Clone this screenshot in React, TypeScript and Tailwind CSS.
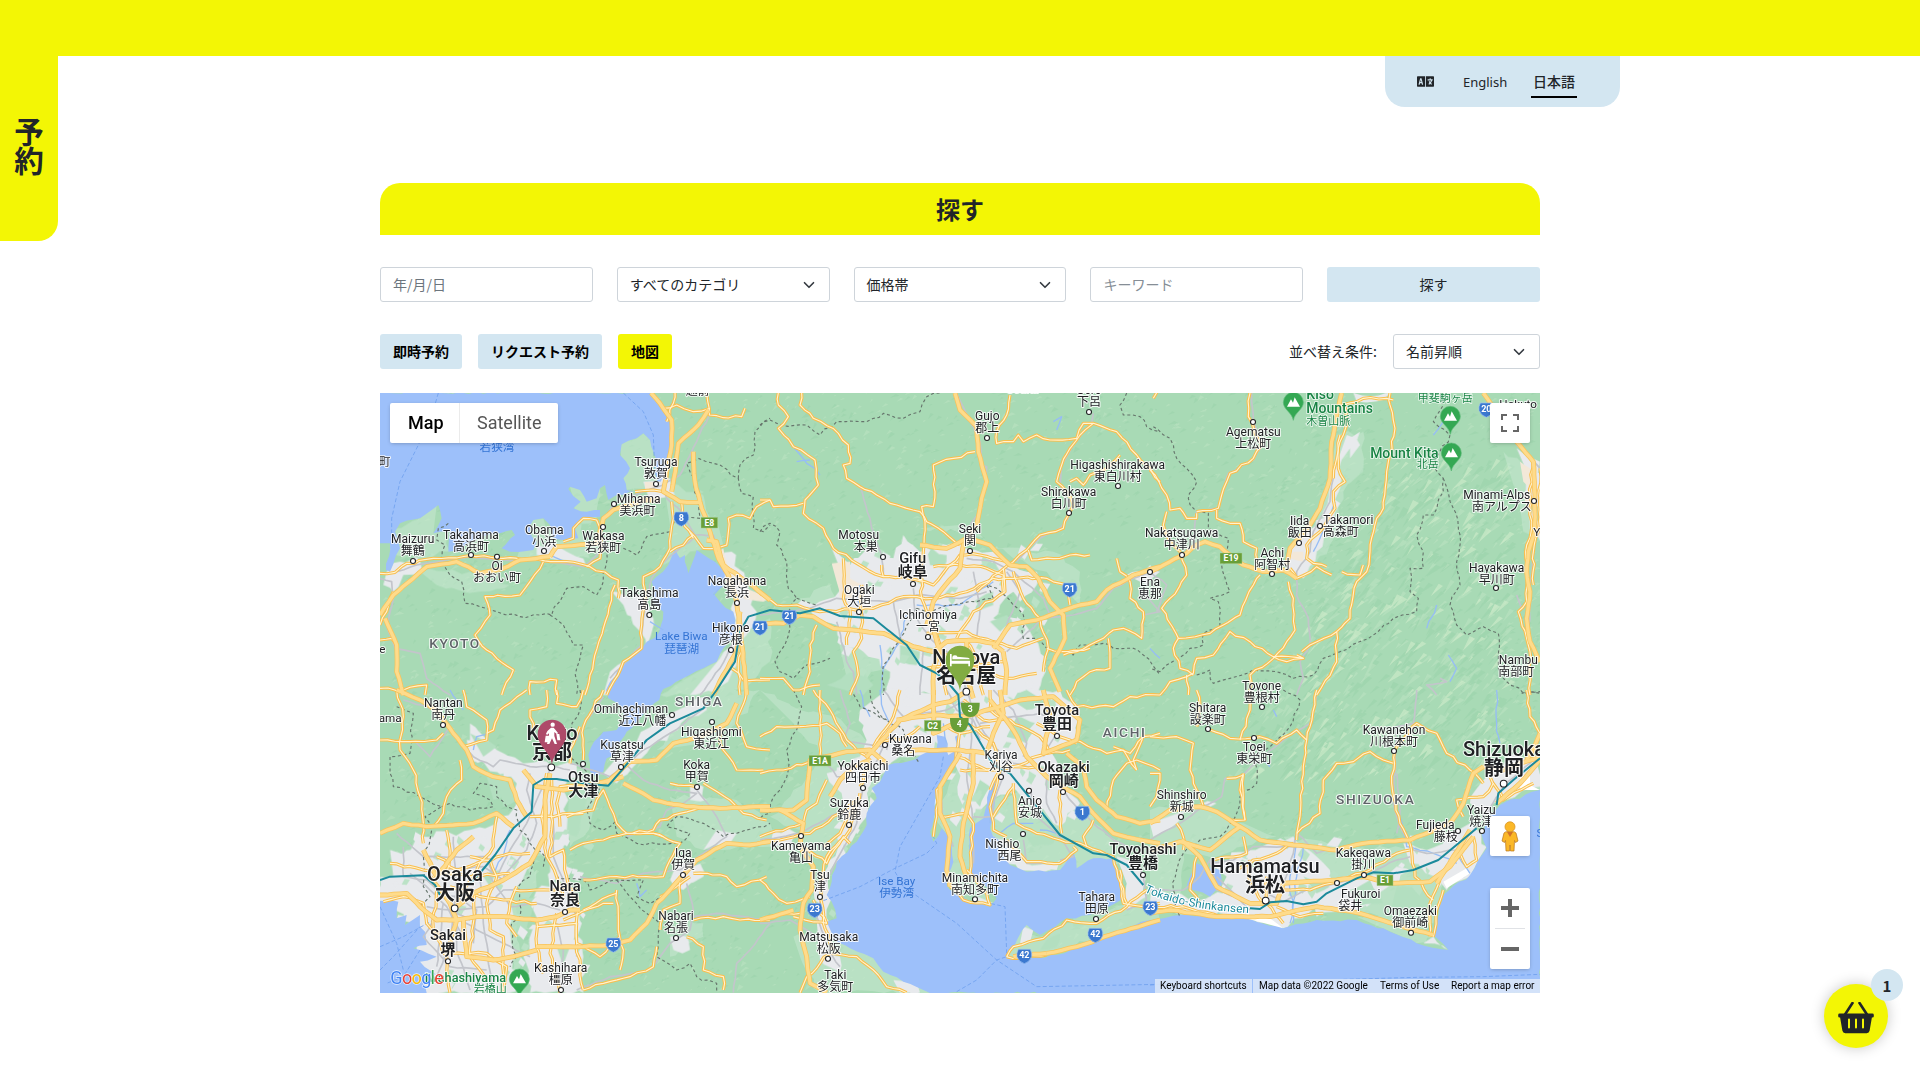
import React from "react";
import { FaLanguage } from "react-icons/fa";

type Tile = {
  x: number;
  y: number;
  light?: string[];
  urban?: string[];
  green?: string[];
  sand?: string[];
  highways: string[];
  roads: string[];
  rails: string[];
  borders: string[];
  ferries: string[];
  streams?: string[];
};

const tiles: Tile[] = [
  {
    x: 0,
    y: 0,
    light: [
      "1040,830 1120,740 1200,700 1200,830 1120,915 1000,930 870,930 930,890",
      "200,360 150,400 75,430 60,500 160,520 240,500 230,440 190,445",
      "750,180 820,145 850,200 860,290 825,312 770,315 760,280",
      "880,290 1000,330 1060,480 960,500 880,540 900,420",
      "480,400 520,400 560,470 610,430 680,400 690,300 640,300 600,305 660,520 440,520",
      "150,560 300,560 420,600 330,620 200,600",
    ],
    urban: [
      "50,560 90,530 150,525 155,550 100,570 70,620 40,600",
      "500,480 545,470 590,500 640,520 650,545 540,520 500,510",
      "820,290 900,280 915,330 840,350",
      "725,620 830,640 850,700 830,790 760,660",
      "1050,520 1085,500 1130,600 1160,680 1120,760 1090,720 1080,610",
      "1050,820 1100,760 1110,830 1040,925 960,930",
      "720,860 760,830 770,850 715,930 700,930",
    ],
    sand: ["825,290 870,290 860,312 825,312", "1040,500 1060,490 1080,560 1120,610 1070,600", "1130,610 1200,640 1180,650 1120,640"],
    highways: [
      "843,24 870,55 905,105 905,180 890,260 880,320 930,350 990,352",
      "1015,75 985,120 925,175 918,240 905,320",
      "970,200 975,290 990,350 1020,440 1045,520 1075,570 1100,650 1110,720 1130,930",
      "30,690 70,630 130,580 170,545 260,530 330,565 400,550 450,525 540,515",
      "540,515 560,485 680,475 700,400 730,375 820,345 870,345",
      "45,700 80,780 80,860 100,930",
      "1010,465 1040,470 1060,540 1130,590 1200,645",
      "1110,680 1100,800 1060,870 1030,930",
    ],
    roads: [
      "30,565 75,562 110,535 190,520 300,512 400,520 500,522 590,530 660,545 745,585 745,640",
      "880,70 920,60 970,80 1020,70",
      "920,0 910,55 890,110",
      "1010,24 1018,90 1060,98 1115,95 1125,70",
      "1200,345 1160,365 1140,400 1100,390 1075,400 1070,480 1040,490",
      "905,350 910,400 900,490 870,545 820,575 825,640 815,720 815,790 760,830 710,930",
      "960,440 1000,490 1040,490",
      "900,500 940,480 970,450",
      "935,350 935,400 970,460",
      "520,530 480,590 450,630 345,635 360,690 315,750 350,795 430,855 395,930",
      "735,600 700,730 660,870 645,930",
      "30,765 65,760 80,780",
      "30,910 100,915 170,900 165,930",
      "70,620 50,680 30,720",
      "580,470 610,460 610,430 640,400 680,405 690,440 690,520 650,545",
      "795,320 850,315 880,320",
      "480,930 480,890 560,885 560,930",
      "1085,850 1120,885 1200,885",
      "1115,780 1105,860 1110,930",
    ],
    rails: [
      "30,580 65,590 70,640 50,720 75,790 150,805 170,880 240,930",
      "80,560 140,540 300,515 400,525 500,525 640,545 690,500 700,400 730,360 820,320 880,300",
      "1010,24 1018,90 980,170 930,270 880,300 890,340 935,380 975,450 1030,450 1060,540 1095,640 1110,730 1050,850 990,930",
      "975,455 870,540 845,580 820,700 815,780 720,880",
    ],
    borders: [
      "235,415 205,430 200,465 225,480 215,530 240,570 275,590 285,655 330,665 380,680 450,695 510,690 545,690 590,610 640,605 680,630 700,590 710,500 740,480",
      "540,690 580,720 610,780 640,780 620,850 620,930",
      "760,490 800,510 830,455 900,440 915,400 990,400 985,340 960,260 950,235 985,220 1050,240 1105,280 1115,325 1150,335 1150,430 1180,440 1200,420",
      "1105,280 1110,240 1150,210 1155,140 1200,100",
    ],
    ferries: ["205,24 180,110 90,290 65,400 65,470", "760,24 820,80 850,150 855,280"],
    streams: ["1030,630 1060,600", "840,710 880,735", "540,510 600,540"],
  },
  {
    x: 1170,
    y: 0,
    light: [
      "480,430 620,440 760,520 860,560 960,660 960,560 880,500 800,500 720,490 600,420",
      "120,640 210,600 250,700 160,690",
      "230,740 330,780 390,860 260,880",
    ],
    urban: [
      "215,490 270,540 330,480 400,520 430,450 480,500 560,480 620,490 700,500 760,540 830,560 830,600 780,650 760,620 720,660 700,700 790,710 820,760 860,820 830,930 380,930 390,860 310,800 250,780 230,720 160,690 110,660 210,640 260,600",
      "1100,570 1170,540 1200,560 1160,600",
    ],
    green: ["420,780 480,800 470,840 420,830", "690,710 740,690 760,720 720,740", "640,650 700,620 700,660 650,680", "500,490 560,510 550,550 510,540", "660,540 700,520 720,560", "200,900 300,850 340,900 310,930"],
    sand: ["215,535 270,530 270,580 310,600 310,640 240,640 230,590"],
    highways: [
      "585,24 600,75 650,125 655,200 680,290 665,340 650,420 610,480 600,550 540,620 520,650 500,720",
      "0,715 70,715 120,690 160,695 220,730 370,745 460,785 520,800 560,770 640,765 700,775 730,800",
      "480,480 560,490 620,460 690,480 750,540 800,545 835,580 870,650 910,690 915,760 870,850 900,920",
      "700,790 750,720 830,705 900,680 960,660 1010,650 1040,615 1120,570 1200,545",
      "520,730 540,800 520,850 520,930",
      "730,800 740,860 735,930",
      "640,940 620,860 620,770",
    ],
    roads: [
      "55,24 55,60 85,95 55,130 100,185 165,225 175,300 135,345 130,385 190,430 220,490 290,535 370,575 450,580 520,600 600,510 660,510 740,530",
      "125,24 120,60 160,100 235,145 265,180 270,235 250,240 260,280 300,305 350,330 390,355 480,380 500,410 550,440 600,480",
      "0,345 30,345 40,365 130,355",
      "645,200 580,220 520,240 525,320 520,365 485,365 495,410 490,500 480,590",
      "750,30 740,90 710,140 710,175 760,170 775,150 790,170 830,150 870,165 950,160 970,115 1000,115 1070,140 1130,210 1200,290",
      "1000,115 960,150 930,190 905,240 890,290 920,320 940,360 925,390 910,430 840,450 800,495 760,530 720,560 650,620",
      "930,290 950,280 970,300 990,270 1040,250 1080,210",
      "805,495 815,525 900,520 930,510 990,510",
      "1070,520 1080,560 1110,590 1110,640 1150,680 1145,760 1090,730 1060,735 1030,760 950,800 910,810",
      "0,625 50,660 110,660 180,680 340,670 430,635 520,640 620,620 700,580 760,580 860,580 920,600 930,660",
      "250,520 250,640 270,670 260,780",
      "305,600 305,760 280,800 295,870 270,930",
      "365,540 370,575",
      "170,720 150,780 150,860 130,930",
      "0,880 70,880 100,915 180,900",
      "485,580 485,640 510,690 540,780 560,930",
      "520,545 600,540 680,550 730,570 730,620",
      "730,550 735,620 640,680 590,760",
      "760,560 790,640 840,700 865,790 850,860",
      "500,745 620,740 700,770 770,790 850,760",
      "1045,760 1050,850 990,860 950,890 930,930",
      "860,790 900,800 990,790",
      "470,790 560,810 650,850 740,880 830,865",
      "500,850 620,840 730,830",
      "620,770 650,820 670,930",
      "1200,0 1180,40",
    ],
    rails: [
      "590,24 630,110 660,170 665,240 680,245 665,370 630,420",
      "1000,85 995,115 940,180 905,240 900,300 925,350 925,400 900,430 840,460 770,530",
      "300,305 330,400 335,430 365,510 370,570",
      "0,690 150,670 230,640 400,650 470,630 600,640 680,620",
      "460,610 465,690 510,760 560,800 610,860 620,930",
      "620,520 700,530 760,560 850,640 870,690",
      "1200,545 1060,610 1010,670 940,690 850,700 740,800",
      "230,710 260,830 280,860 290,930",
      "400,650 420,760 490,800 480,930",
      "640,560 660,680 650,760",
      "1150,620 1200,680 1150,690 1150,760",
      "740,560 780,620 740,720",
    ],
    borders: [
      "0,120 30,105 60,120 140,120 180,150 230,110 320,110 370,85 430,100 480,80 500,35 540,24",
      "0,440 30,415 60,440 50,480 80,530 85,610 110,640 80,690 90,730 60,800 45,830 60,860 100,880 140,840 210,820",
      "110,640 170,660",
      "470,670 500,680 580,660 650,650 700,640 680,600 710,610 760,660 790,690 790,760 830,760 860,790 900,800 940,810 960,780 1030,775 1060,790 1120,790 1150,810 1200,870",
      "470,670 420,760 370,840 370,930",
      "1100,24 1080,60 1090,90 1140,95 1160,125 1200,140",
    ],
    ferries: [],
    streams: ["90,170 140,235 180,270", "440,690 420,770 370,850 360,930", "300,600 290,640 310,690", "470,660 600,660 700,590", "880,110 905,95 890,135", "110,230 150,225", "360,780 365,850"],
  },
  {
    x: 2340,
    y: 0,
    light: [
      "560,150 640,140 640,260 580,320 540,480 460,580 420,560 480,440 530,330",
      "1060,200 1170,280 1170,460 1120,440 1090,300",
    ],
    urban: [
      "590,150 630,140 630,180 600,220 600,190 570,240 570,310 555,380 530,430 500,500 460,580 410,560 420,480 470,440 520,400 540,290",
      "610,24 720,24 700,45 620,50",
      "1100,190 1170,230 1170,470 1140,430 1150,370 1120,330 1130,260",
    ],
    green: [],
    sand: ["430,500 460,500 460,530 420,520", "1120,330 1140,330 1140,400", "1110,230 1140,250 1150,320 1120,290"],
    highways: [
      "575,24 560,90 545,170 540,280 510,370 480,420 420,490 410,540",
      "0,560 60,530 110,505 140,480 165,470 210,485 240,510 280,540 340,560 400,555 440,580",
      "1000,24 1100,170 1150,230 1155,330 1155,440 1135,500 1130,560 1140,620 1130,700 1140,770 1170,830",
    ],
    roads: [
      "300,24 295,95 335,180 310,220 240,265 215,330 205,370 140,380",
      "0,255 50,330 60,375 90,370 110,400 140,400 140,385",
      "50,380 40,420 60,470 90,500 110,570 60,640 35,670 85,760 180,745 220,720 270,690 310,600 330,570",
      "200,375 200,400 240,415 270,415 280,470 320,490 320,550",
      "85,760 70,790 90,850 130,870",
      "30,930 60,890 130,865 140,820 190,810 240,740 300,770 370,815 460,820 440,810",
      "300,920 300,870 370,820 410,770 435,735 430,640 415,590",
      "370,815 410,830 460,820",
      "720,24 720,60 735,130 710,260 700,370 680,400 660,500 650,560 620,590 600,700 560,740 480,780 455,800",
      "560,740 560,830 500,930",
      "640,540 630,570 575,560",
      "420,550 440,580 500,545 545,570",
      "585,60 590,120 570,170 565,250 585,290 550,320 555,370 510,440 470,480 470,520 490,535 530,545",
      "560,70 640,40 730,45",
      "570,150 560,220 550,280",
      "1150,230 1140,330 1145,430 1130,480 1130,650 1105,680 1130,760 1140,800 1140,930",
      "1170,250 1165,440 1150,500 1150,600",
      "110,870 115,930",
    ],
    rails: [
      "305,24 310,110 335,185 310,225 235,265 205,370 140,380 130,480 95,510 0,560 50,600 20,680",
      "560,220 545,300 540,350 490,440 480,500 440,560 440,630 475,700 480,780 450,830 460,880 440,930",
      "1100,180 1170,250",
      "1150,510 1140,600 1140,700 1130,760",
      "870,880 890,890 830,900 860,930",
      "1100,630 1115,670",
    ],
    borders: [
      "10,125 60,160 80,220 110,250 140,290 115,340 135,375 175,385 175,430 235,460 230,530 215,540 240,620 180,640 205,650 210,720 160,745 160,780 120,790 50,840 30,860 0,850",
      "180,860 190,895 240,880 310,855 380,860 430,880 490,870 520,820 570,800 670,750 730,700 800,680 805,640 780,620 780,550 820,550 820,500 800,450 820,390 850,390 880,320 880,280 850,240 900,150 850,110 880,60 870,24",
      "880,280 910,370 930,450 920,530 930,600 900,660 920,720 950,750 1000,725 1045,745 1045,850 1070,890 1120,925 1170,925",
      "140,870 180,855",
    ],
    ferries: [],
    streams: ["895,810 920,850 900,890", "830,730 860,660", "555,350 540,400 490,500", "850,150 880,110", "0,790 30,820"],
  },
  {
    x: 0,
    y: 915,
    light: [
      "600,230 660,250 700,290 640,440 600,470",
      "860,180 940,100 1060,0 1170,0 1100,100 1000,160",
      "900,320 1100,330 1200,400 1200,470 1000,480 920,440",
      "900,700 1000,700 1000,740 900,800",
      "430,580 500,540 500,590 440,720 460,900 430,900 420,700",
    ],
    urban: [
      "300,100 380,180 460,220 620,225 620,260 580,300 600,420 580,470 620,620 640,800 640,908 480,908 460,800 500,700 500,600 540,590 540,510 500,480 440,590 420,700 430,800 450,880 420,908 150,908 130,700 30,640 30,560 140,530 90,500 160,440 300,420 380,400 440,340 440,280 400,260 300,200",
      "700,250 760,180 860,90 1000,20 1010,60 900,130 830,190 740,280",
      "920,520 990,520 1000,560 940,600 900,570",
      "60,480 150,490 200,480 200,550 70,560",
      "900,740 950,740 960,780 910,780",
      "960,290 1000,290 1010,330 960,330",
      "1040,420 1100,430 1080,460 1000,480",
      "290,150 370,170 380,210 300,210",
    ],
    green: ["340,560 390,540 360,590", "600,260 650,330 620,440 590,430", "350,260 400,250 420,310 370,330", "440,620 500,620 460,740 440,740", "560,770 600,770 580,830", "300,130 380,170 340,200", "390,300 430,290 440,330 400,350"],
    highways: [
      "30,430 100,400 170,410 250,405 310,400 380,370 430,410",
      "80,0 150,30 200,60 250,130 290,180 310,230 370,260 420,270 440,330 470,380",
      "30,615 110,610 150,650 200,690 260,690 320,680 400,680 500,690 560,680 600,660 630,660",
      "540,250 525,330 525,440 480,520 400,570 310,610 260,650",
      "460,240 500,290 580,300 680,280 760,260",
      "710,280 780,215 860,210 910,160 990,140 1070,100 1100,40",
      "760,280 800,300 850,330 950,350 1050,355 1200,350",
      "860,640 900,600 980,510 1070,460 1140,465 1200,455",
      "860,640 830,700 780,750 720,765 640,770 500,770",
      "280,690 290,800 370,810 430,800 500,780",
      "180,560 240,640 260,690 230,790",
      "160,480 200,560 260,480 310,440",
    ],
    roads: [
      "30,150 120,155 200,150 220,130",
      "80,0 100,80 90,180 130,240 150,320 160,400 160,460",
      "280,0 290,50 350,90 350,150 280,170",
      "470,0 390,60 370,120 350,130",
      "270,210 275,270 230,320 220,370 190,410",
      "560,0 560,40 620,50 640,0",
      "490,120 480,60 530,50 530,0",
      "530,250 525,300 515,380 530,500 560,560 580,620",
      "545,270 545,420 540,500 580,480 590,560 620,640",
      "630,110 600,180 600,220",
      "700,0 640,110 640,210",
      "590,380 670,360 680,330 700,300 720,350 740,400 770,430 850,430 880,440",
      "640,370 600,370 550,380 480,380",
      "600,480 640,460 700,450 770,430 850,420 870,390 930,370 1000,350",
      "1060,100 1050,160 1100,240 1180,240",
      "1000,280 1080,330 1120,370 1190,390",
      "850,430 930,460 900,510 880,560 830,560 740,560 640,570",
      "970,550 1070,560 1100,590 1190,560",
      "960,560 920,590 870,620",
      "930,570 930,640 880,660 870,720",
      "970,690 1060,680 1110,690 1200,690",
      "950,740 1000,770 1000,840 1060,860 1060,900",
      "740,600 745,720 760,780 750,840",
      "640,660 740,610",
      "500,690 500,770 520,850",
      "560,670 540,790 570,908",
      "40,635 100,620 160,640 170,700 220,740",
      "300,500 360,510 380,560 350,640 360,720 400,740 400,908",
      "200,500 260,540 320,520 420,490 480,490",
      "380,380 370,470 320,540 280,600 260,640",
      "230,420 240,500 230,560",
      "580,690 700,640 730,640",
      "500,710 620,700 620,760 690,800 750,740",
      "440,590 420,640 410,700 440,740",
      "860,770 850,830 780,860 700,880 640,900",
      "1130,0 1100,100 1130,170 1200,180",
      "570,410 560,340 570,290 700,280",
      "430,600 540,600 620,600",
      "220,790 350,790 410,830 400,900",
      "900,280 980,290",
      "60,520 160,540 300,560 420,550",
      "310,600 310,700 300,800 350,870",
      "200,600 190,720 230,800 240,908",
      "620,620 620,760 640,900",
      "240,590 330,620 400,630 500,640",
    ],
    rails: [
      "130,150 180,200 240,110 200,60 100,30",
      "250,130 310,200 370,230 390,210 480,230 560,230 600,240",
      "590,180 620,150 640,110 700,20",
      "380,560 420,480 470,400 500,330 540,240",
      "540,250 550,400 550,500 590,600 620,680 620,800",
      "600,220 720,260 820,180 900,130 1010,50",
      "760,220 820,270 900,300 980,310 940,340 890,360 870,410 770,440",
      "980,300 1040,380 1070,440 1000,490 930,540",
      "930,540 820,550 740,580 630,560",
      "80,430 160,500 250,500 350,500 370,560",
      "100,470 100,560 170,570 240,640",
      "250,440 260,640 260,780 300,900",
      "200,540 340,530 400,570",
      "240,670 320,720 400,760 480,800",
      "260,660 350,650 400,600 540,600 560,590",
      "200,680 160,740 240,830 350,840",
      "330,570 340,700 370,908",
      "360,560 420,650 500,640 570,660",
      "560,700 580,780 570,908",
      "950,580 970,660 960,720 900,760 840,840 720,860 620,900",
      "970,680 1040,670 1200,690",
      "1200,700 1140,780 1100,820 1090,908",
      "480,250 470,300 500,400 470,480 400,560",
      "220,640 210,740 200,830",
      "190,610 260,620 320,660 310,760",
      "170,650 240,660 300,690",
      "270,560 250,660 240,760 200,860",
      "120,550 180,600 230,650 280,740",
    ],
    borders: [
      "80,50 130,70 120,190 60,200 60,250 70,290 150,320 215,350 165,380 185,420 160,500 160,590 180,620 150,650",
      "215,350 240,340 300,360 370,350 360,330 310,310 330,280 380,290 380,320 410,350 440,360 450,420 480,460 525,500 520,530",
      "500,480 480,560 445,590 450,680 425,700 430,780 440,800 420,830",
      "525,500 560,560 640,570 660,600 740,570 820,570 800,620 840,640 870,620",
      "630,0 630,60 590,140 600,200 660,260 690,300 650,360 660,400 700,420 740,390 740,430 800,460 930,460 960,430 890,410 920,380 1000,400 1060,440 1100,430 1200,400",
      "740,570 780,620 830,670 870,700 860,800 920,840 960,820 980,860 1040,880 1040,908",
    ],
    ferries: ["30,770 100,740 190,690", "30,840 70,800 150,710", "30,650 80,760 100,840", "150,780 100,860 50,880"],
    streams: ["240,0 280,60", "370,120 320,140 310,180", "420,420 400,500 360,560", "800,580 810,620 830,600"],
  },
  {
    x: 1170,
    y: 915,
    light: [
      "0,0 120,60 230,80 370,200 380,240 300,350 220,500 130,500 120,420 30,380 100,300 200,200 100,100",
      "100,740 210,720 260,760 340,790 420,850 510,908 180,908 120,800",
      "740,800 790,700 840,740 920,700 1050,660 1200,600 1200,690 1050,730 880,795",
      "520,380 600,220 640,260 690,320 630,420 640,550 690,640 600,620 550,560 580,460",
      "700,330 780,300 960,350 1080,460 1080,520 960,540 800,540 690,440",
    ],
    urban: [
      "380,0 900,0 960,60 950,150 870,180 900,260 960,340 900,410 820,350 760,290 690,330 640,380 600,370 590,200 420,200 330,290 320,380 240,510 210,540 210,700 170,690 160,600 240,460 250,340 200,250 300,200 320,150 300,60",
      "680,420 760,470 800,520 900,510 890,540 780,545 700,480",
      "1070,500 1140,520 1160,620 1090,660 1100,580",
      "170,690 220,700 200,780 240,800 240,850 180,810",
      "40,420 110,430 100,480 30,470",
      "640,620 700,640 680,650",
      "400,870 450,860 480,908 420,908",
      "790,710 820,720 810,760 780,760",
      "600,200 690,200 690,280 650,340 620,300",
    ],
    green: [
      "660,270 690,290 660,350 640,320",
      "770,80 830,100 800,160 740,140",
      "640,370 690,340 690,420 650,440",
      "740,20 800,0 860,40 800,60",
      "940,680 1010,670 1000,700 940,710",
      "860,750 900,730 890,770 840,780",
      "800,440 890,430 880,460 820,470",
      "460,110 500,90 500,130",
    ],
    highways: [
      "380,220 330,180 260,185 150,210 140,330 100,360 0,360",
      "320,200 420,90 520,45 570,35 610,10",
      "410,90 520,75 610,80 720,50 780,30 880,20 960,90 950,150 850,190 870,80 850,0",
      "440,180 600,180 680,190 700,130 730,70 720,0",
      "600,190 540,290 540,370 570,440 560,540 570,590",
      "640,180 640,280 610,400 600,500 620,560",
      "690,30 760,120 800,200 860,260 960,320 1000,370 1060,430 1140,450 1200,460",
      "920,190 970,230 980,290 1010,330 1070,380 1140,400 1200,390",
      "60,360 130,400 120,470 160,530 155,600 130,640 120,720 140,800 150,880 200,908",
      "0,690 100,660",
      "860,790 950,770 1050,735 1200,690",
      "760,800 860,790",
      "210,320 240,270 280,230 330,210",
      "520,0 520,130 610,90",
    ],
    roads: [
      "0,140 50,110 120,110 200,100 240,130 260,170",
      "180,0 180,100 180,200",
      "0,250 70,240 150,215",
      "160,0 210,60 260,150 330,210 300,290",
      "420,0 400,80 340,170",
      "590,200 680,240 760,230 830,230",
      "200,270 170,340 140,360 130,400 0,440",
      "300,310 270,420 200,500 180,580 190,700 220,780",
      "0,460 60,450 150,430 240,370 300,320",
      "130,470 200,520 250,440 270,460",
      "0,570 40,610 80,640 150,620",
      "0,690 80,670 120,670",
      "215,790 290,800 340,840 380,890 440,908",
      "120,908 140,860 180,820 210,790",
      "540,380 620,370 640,400 630,550",
      "520,440 530,380 530,300 580,230 610,90",
      "600,240 700,240 760,230 860,190 930,180",
      "720,240 690,350 700,420 740,440",
      "740,450 800,515 900,520 950,480 940,470",
      "760,280 770,400 830,430 900,450 960,460 1060,500 1100,640",
      "700,380 760,290",
      "900,300 905,430",
      "1000,390 970,440 980,470",
      "1040,360 1060,270 1100,220 1130,210 1200,240",
      "940,150 1040,190 1090,180 1130,240",
      "920,0 950,50 1060,50 1110,20 1200,15",
      "1060,170 1110,190 1150,140 1200,130",
      "1150,130 1120,210 1130,240",
      "570,590 610,630 690,645 680,610 620,540",
      "740,800 760,770 850,745 920,690 1010,700 1100,650 1160,600",
      "740,800 780,805 860,795",
      "1080,540 1090,640 1150,650 1200,640",
      "620,100 700,160 720,240 690,300",
      "610,30 670,90 750,90 840,140 870,190",
      "560,110 600,130 690,110",
      "830,100 900,140 950,160",
      "690,0 690,60 730,90",
      "160,630 200,700 100,680",
      "290,340 240,430 190,470",
      "480,110 420,150 350,150",
    ],
    rails: [
      "240,0 270,100 250,150 370,170 340,230 310,290 290,400 230,510 190,590 170,680 205,780 240,830",
      "180,190 230,260 320,260",
      "440,80 390,130 380,180",
      "370,0 430,80 560,60 620,30",
      "620,0 650,90 700,170 760,220 860,240 940,340 1000,400 1060,450 1120,480 1150,560 1160,640 1100,660",
      "590,200 540,300 550,400 580,470",
      "640,60 630,190 620,250 640,400 640,520",
      "700,200 730,260 700,340 700,420",
      "810,300 830,380 890,430 940,500 900,510",
      "0,450 120,430 230,370",
      "0,700 90,690 170,740",
      "790,450 800,520 900,520",
      "660,100 760,80 840,70 900,110 850,200",
      "700,0 760,60 800,160 790,200",
      "640,380 690,380",
      "860,260 860,340 890,400",
      "560,0 590,60 640,90 660,150",
      "600,40 640,70 720,60",
    ],
    borders: [
      "100,0 125,50 110,120 80,180 85,240 60,300 40,320 30,370 0,385",
      "270,0 300,50 380,90 430,120 440,160 475,215",
      "330,0 340,50 380,90",
    ],
    ferries: [
      "550,200 540,260 420,470 405,545 430,590 590,700 710,810 830,890 1200,883",
      "190,632 300,590 405,535 500,490 530,460 520,440",
      "740,790 735,650 690,640",
      "590,905 650,870 710,810 740,800",
    ],
    streams: ["360,0 370,60 400,110", "300,0 310,50 330,80", "700,280 690,400", "720,430 760,400 820,400", "840,420 890,430", "550,100 560,180", "700,440 740,480"],
  },
  {
    x: 2340,
    y: 915,
    light: [
      "0,360 150,340 280,400 380,440 200,500 100,490 80,640 0,610",
      "400,440 560,470 780,480 900,530 850,700 700,690 500,620 450,500",
      "1120,260 1170,240 1170,300 1130,300",
      "620,680 780,690 860,740 800,760",
    ],
    urban: [
      "180,520 300,480 430,440 460,470 540,540 540,620 400,715 280,680 80,670 0,640 0,590 120,630 220,610 230,560",
      "580,560 700,560 740,530 780,540 700,600 620,660 500,680 500,610",
      "760,460 830,480 960,400 1010,470 970,540 890,600 860,560 780,520",
      "960,340 1010,260 1100,190 1170,210 1170,290 1030,340 1020,380",
      "140,350 200,340 130,350 80,400 10,440 0,400",
      "850,740 895,780 820,760",
      "620,600 680,620 650,650",
    ],
    green: ["600,600 660,570 700,640 620,650", "740,590 840,600 830,700 720,670", "460,560 540,590 500,610", "280,520 320,500 330,540"],
    highways: [
      "0,400 60,360 150,350 200,365 270,410 330,450 430,465 560,480 640,460 780,450 900,400 940,340 970,250 1000,230",
      "0,480 90,455 180,480 270,410",
      "95,450 150,500 200,590 300,640 380,640 400,580 560,570 640,560 720,580 840,575 900,530 970,440",
      "0,670 60,660 200,680 360,680 500,650 630,670 760,710 850,735",
      "1000,230 1060,240 1170,200",
      "1040,340 1110,280 1170,210",
      "1170,130 1150,180 1130,210",
      "960,420 910,500 860,580",
    ],
    roads: [
      "0,140 80,140 130,160 120,240 140,300 160,350",
      "180,120 240,145 330,140 380,160 440,120 470,150 460,230 450,380 440,450",
      "500,0 480,110 470,150",
      "270,150 300,60 300,0",
      "280,250 270,300 285,390 240,390",
      "230,265 280,255 280,330 285,390",
      "0,250 30,250 20,320 0,350",
      "440,430 510,370 520,270 560,220 610,215 660,185 700,210 730,220",
      "735,180 800,100 860,130 890,190 960,240 1000,280",
      "735,180 725,280 750,400 780,460",
      "780,460 795,560 850,630",
      "880,600 860,660 850,740",
      "870,570 840,640 840,740",
      "1130,0 1140,80 1170,130",
      "600,560 660,540 740,490 780,480",
      "140,500 120,600 150,640",
      "280,440 290,490 190,510",
      "430,460 380,490 310,510 260,540",
      "350,560 350,640 400,700",
      "400,600 480,600 600,560",
      "380,650 450,680 520,670",
      "940,380 920,330 1000,320 1030,280",
      "970,440 980,510 950,530 930,490",
      "140,0 150,50 140,110",
      "80,400 100,440 100,480",
      "0,650 100,650 210,680",
      "1020,260 1060,330 1150,280",
      "300,510 300,580 340,640",
    ],
    rails: [
      "500,20 480,100 400,150 340,200 270,260 225,265 215,320 160,350 90,400 0,450",
      "440,430 430,470 310,470 250,510 180,520",
      "800,0 790,100 740,110 730,340 750,410 790,480 830,490 920,480 980,410",
      "400,580 430,490 440,430 500,490 530,480",
      "300,580 400,635 470,600 560,580 640,560 740,510 780,500",
      "0,600 100,600 150,560 180,510 200,600 300,640",
      "200,560 300,660",
      "980,410 1060,290 1170,190",
      "740,250 750,360 740,430",
    ],
    borders: [
      "400,0 450,30 420,110 360,170 320,200 320,280 270,320 260,370 210,440 150,450 100,490 80,540 70,600 90,680",
      "1115,10 1170,5",
    ],
    ferries: ["580,868 800,862 1000,860 1170,853", "0,885 20,884"],
    streams: ["1040,0 1040,100 1050,160", "440,460 420,560 430,700", "460,470 440,560 420,700", "750,380 770,470 850,490 920,520", "370,60 380,80", "340,210 360,230", "920,490 960,550"],
  },
];

const water = [
  "30,24 843,24 880,70 905,120 903,200 885,260 872,290 862,288 858,240 850,200 840,165 820,145 800,160 755,178 750,210 780,250 760,280 770,315 795,320 740,330 715,345 705,300 690,310 680,340 650,350 630,315 600,305 595,312 632,350 610,370 650,380 690,375 690,395 640,400 615,430 625,460 580,465 545,455 540,420 520,400 490,405 480,440 500,470 490,495 420,500 395,490 435,450 425,435 390,445 350,450 300,470 270,500 235,500 240,440 190,445 215,400 205,360 150,400 90,415 75,440 90,490 60,560 48,555 60,475 30,475",
  "915,490 930,520 945,510 955,565 968,530 980,495 1035,530 1065,560 1060,600 1030,625 1050,650 1090,680 1100,740 1085,760 1060,790 1040,830 1000,850 940,880 880,912 868,945 840,965 810,1000 770,1040 750,1070 735,1110 710,1120 700,1160 680,1175 660,1160 655,1110 672,1070 700,1040 740,1035 765,1000 755,965 715,940 708,915 720,890 760,840 815,790 868,740 880,680 850,650 845,590 895,540",
  "30,1547 85,1550 80,1600 110,1590 105,1620 150,1590 150,1625 165,1640 170,1680 130,1690 200,1715 150,1730 200,1770 160,1790 170,1824 30,1824",
  "1555,1140 1610,1130 1700,1090 1700,1050 1725,1055 1735,1110 1760,1095 1755,1055 1765,1050 1770,1100 1740,1160 1705,1200 1695,1280 1680,1340 1690,1370 1715,1330 1745,1370 1750,1430 1725,1480 1735,1510 1800,1550 1860,1565 1880,1540 1800,1460 1800,1330 1840,1300 1870,1180 1880,1180 1875,1230 1860,1330 1890,1400 1920,1440 1970,1460 2070,1455 2110,1400 2120,1450 2170,1420 2230,1420 2250,1480 2260,1540 2160,1590 2090,1600 2010,1650 1970,1620 1910,1715 1960,1725 2060,1710 2150,1675 2250,1635 2340,1605 2430,1590 2620,1595 2740,1630 2840,1605 2960,1605 3060,1640 3140,1675 3235,1695 3190,1650 3200,1605 3220,1530 3300,1470 3350,1390 3335,1350 3360,1290 3390,1260 3510,1215 3510,1824 1680,1824 1600,1790 1540,1760 1510,1720 1440,1690 1390,1665 1370,1610 1400,1600 1385,1550 1370,1530 1385,1490 1400,1430 1460,1370 1490,1320 1490,1285 1520,1240 1505,1210 1530,1190",
  "2480,1435 2550,1455 2555,1500 2520,1535 2450,1510 2460,1475",
];

const beaches = ["2610,1595 2740,1630 2700,1600", "3300,1465 3230,1510 3220,1490 3290,1450", "3450,1170 3480,1170 3480,1200 3510,1215 3450,1215"];

const shinkansen =
  "30,1485 60,1475 160,1471 195,1500 210,1530 M300,1495 325,1470 375,1410 430,1330 485,1280 490,1200 520,1182 560,1182 640,1195 715,1202 760,1150 830,1065 900,1015 1000,970 1040,915 1095,830 1110,740 1135,695 1200,675 1290,685 1350,670 1410,693 1510,700 1610,780 1650,840 1700,865 1740,900 1765,930 1770,995 1800,1020 1870,1140 1920,1165 2070,1350 2170,1405 2210,1410 2270,1440 2320,1500 M2640,1570 2670,1572 2700,1552 2750,1548 2800,1558 2840,1550 2870,1525 2960,1480 3010,1462 3070,1465 3130,1455 3205,1425 3320,1330 M3380,1260 3385,1225 3430,1185 3510,1120";

type Label = [number, number, string, string, ("s" | "m" | "l")?, (number | null)?, number?];

/* x, baseline y, latin name, local name, size, dot x, dot y */
const labels: Label[] = [
  [858, 244, "Tsuruga", "敦賀", "s", 858, 297],
  [806, 353, "Mihama", "美浜町", "s", 732, 357],
  [523, 446, "Obama", "小浜", "s", 522, 498],
  [303, 461, "Takahama", "高浜町", "s", 303, 510],
  [128, 475, "Maizuru", "舞鶴", "s", 129, 528],
  [381, 556, "Oi", "おおい町", "s", 381, 515],
  [700, 466, "Wakasa", "若狭町", "s", 699, 426],
  [838, 637, "Takashima", "高島", "s", 838, 690],
  [1101, 601, "Nagahama", "長浜", "s", 1101, 654],
  [1082, 742, "Hikone", "彦根", "s", 1083, 795],
  [1852, 106, "Gujo", "郡上", "s", 1851, 159],
  [2157, 28, "Gero", "下呂", "s", 2157, 81],
  [2243, 253, "Higashishirakawa", "東白川村", "s", 2244, 303],
  [2096, 334, "Shirakawa", "白川町", "s", 2097, 384],
  [1466, 463, "Motosu", "本巣", "s", 1539, 516],
  [1800, 445, "Seki", "関", "s", 1800, 498],
  [1628, 533, "Gifu", "岐阜", "m", 1629, 597],
  [1468, 628, "Ogaki", "大垣", "s", 1467, 681],
  [1674, 703, "Ichinomiya", "一宮", "s", 1674, 756],
  [2340, 604, "Ena", "恵那", "s", 2340, 561],
  [2650, 152, "Agematsu", "上松町", "s", 2649, 111],
  [2435, 457, "Nakatsugawa", "中津川", "s", 2436, 510],
  [2789, 421, "Iida", "飯田", "s", 2787, 474],
  [2935, 418, "Takamori", "高森町", "s", 2850, 423],
  [2707, 517, "Achi", "阿智村", "s", 2706, 567],
  [3380, 343, "Minami-Alps", "南アルプス", "s", 3492, 348],
  [3380, 560, "Hayakawa", "早川町", "s", 3378, 609],
  [3445, 836, "Nambu", "南部町"],
  [2675, 916, "Toyone", "豊根村", "s", 2676, 966],
  [220, 967, "Nantan", "南丹", "s", 219, 1020],
  [546, 1065, "Kyoto", "京都", "l", 544, 1147],
  [783, 985, "Omihachiman", "近江八幡", "s", 906, 990],
  [1024, 1054, "Higashiomi", "東近江", "s", 1026, 1011],
  [756, 1093, "Kusatsu", "草津", "s", 753, 1146],
  [980, 1153, "Koka", "甲賀", "s", 981, 1206],
  [640, 1191, "Otsu", "大津", "m", 639, 1137],
  [255, 1487, "Osaka", "大阪", "l", 254, 1570],
  [585, 1518, "Nara", "奈良", "m", 585, 1581],
  [234, 1666, "Sakai", "堺", "m", 234, 1729],
  [940, 1417, "Iga", "伊賀", "s", 939, 1470],
  [918, 1606, "Nabari", "名張", "s", 918, 1659],
  [572, 1761, "Kashihara", "橿原", "s", 573, 1815],
  [1789, 837, "Nagoya", "名古屋", "l", 1789, 920],
  [1621, 1075, "Kuwana", "桑名", "s", 1545, 1080],
  [1479, 1155, "Yokkaichi", "四日市", "s", 1479, 1209],
  [1438, 1267, "Suzuka", "鈴鹿", "s", 1437, 1320],
  [1293, 1396, "Kameyama", "亀山", "s", 1293, 1353],
  [1350, 1483, "Tsu", "津", "s", 1350, 1536],
  [1376, 1669, "Matsusaka", "松阪", "s", 1374, 1721],
  [1396, 1783, "Taki", "多気町"],
  [1815, 1492, "Minamichita", "南知多町", "s", 1815, 1543],
  [1893, 1123, "Kariya", "刈谷", "s", 1893, 1176],
  [2061, 990, "Toyota", "豊田", "m", 2061, 1053],
  [2081, 1160, "Okazaki", "岡崎", "m", 2079, 1221],
  [1980, 1261, "Anjo", "安城", "s", 1977, 1217],
  [1897, 1390, "Nishio", "西尾", "s", 1959, 1347],
  [2319, 1406, "Toyohashi", "豊橋", "m", 2319, 1470],
  [2180, 1549, "Tahara", "田原", "s", 2178, 1602],
  [2513, 982, "Shitara", "設楽町", "s", 2514, 1032],
  [2653, 1099, "Toei", "東栄町", "s", 2652, 1059],
  [3072, 1048, "Kawanehon", "川根本町", "s", 3072, 1098],
  [3402, 1112, "Shizuoka", "静岡", "l", 3401, 1196],
  [2435, 1243, "Shinshiro", "新城", "s", 2433, 1296],
  [3334, 1286, "Yaizu", "焼津", "s", 3336, 1338],
  [3196, 1333, "Fujieda", "藤枝", "s", 3264, 1338],
  [2980, 1417, "Kakegawa", "掛川", "s", 2982, 1470],
  [2685, 1463, "Hamamatsu", "浜松", "l", 2687, 1547],
  [2972, 1538, "Fukuroi", "袋井", "s", 2901, 1494],
  [3121, 1591, "Omaezaki", "御前崎", "s", 3123, 1643],
];

const labelStyle = {
  s: { cls: "text-[36px] font-normal", gap: 36, jp: "text-[36px] font-normal" },
  m: { cls: "text-[44px] font-medium", gap: 43, jp: "text-[45px] font-bold" },
  l: { cls: "text-[60px] font-medium", gap: 58, jp: "text-[60px] font-bold" },
};

function random(seed: number) {
  let s = seed;
  return () => {
    s = (s * 1664525 + 1013904223) % 4294967296;
    return s / 4294967296;
  };
}

/* Splits each segment into short steps with small offsets, for winding lines. */
function wind(points: string, amp: number, step: number) {
  const pts = points.split(" ").map((p) => p.split(",").map(Number));
  const rnd = random(pts[0][0] * 31 + pts[0][1] * 17 + pts.length);
  const out: string[] = [pts[0].join(",")];
  for (let i = 1; i < pts.length; i++) {
    const [ax, ay] = pts[i - 1];
    const [bx, by] = pts[i];
    const n = Math.max(1, Math.round(Math.hypot(bx - ax, by - ay) / step));
    for (let k = 1; k < n; k++) {
      const x = ax + ((bx - ax) * k) / n + (rnd() - 0.5) * 2 * amp;
      const y = ay + ((by - ay) * k) / n + (rnd() - 0.5) * 2 * amp;
      out.push(`${x.toFixed(1)},${y.toFixed(1)}`);
    }
    out.push(`${bx},${by}`);
  }
  return out.join(" ");
}

const facets = (() => {
  const rnd = random(11);
  const light: string[] = [];
  const dark: string[] = [];
  const bright: string[] = [];
  for (let i = 0; i < 6200; i++) {
    const ridgeSeed = i > 5200;
    const x = ridgeSeed ? 2620 + rnd() * 890 : 30 + rnd() * 3480;
    const y = ridgeSeed ? 250 + rnd() * 950 : 24 + rnd() * 1800;
    const ridge = x + y * 0.55 > 3200 && y > 250 && y < 1200 && x < 3400;
    const size = (ridge ? 34 : 15) * (0.5 + rnd());
    const a = ridge ? -1.15 + rnd() * 0.35 : -1.3 + rnd() * 0.8;
    const dx = Math.cos(a) * size;
    const dy = Math.sin(a) * size;
    const w = size * (ridge ? 0.2 + rnd() * 0.2 : 0.3 + rnd() * 0.4);
    const d = `M${x.toFixed(0)},${y.toFixed(0)}l${dx.toFixed(0)},${dy.toFixed(0)}l${w.toFixed(0)},${(w * 0.5).toFixed(0)}z`;
    const pick = rnd();
    if (pick < 0.5) dark.push(d);
    else if (ridge && pick > 0.82) bright.push(d);
    else light.push(d);
  }
  return { light: light.join(""), dark: dark.join(""), bright: bright.join("") };
})();

/* Scattered blocks along the edges of built-up land. */
const patches = (() => {
  const rnd = random(5);
  const zones = [
    [1400, 470, 620, 450],
    [1560, 900, 560, 420],
    [60, 1340, 580, 470],
    [2560, 1380, 380, 200],
    [1340, 1200, 220, 500],
    [3080, 1350, 260, 160],
  ];
  const green: string[] = [];
  const gray: string[] = [];
  zones.forEach(([zx, zy, zw, zh]) => {
    const n = Math.round((zw * zh) / 3600);
    for (let i = 0; i < n; i++) {
      const x = zx + rnd() * zw;
      const y = zy + rnd() * zh;
      const s = 10 + rnd() * 16;
      const d = `M${x.toFixed(0)},${y.toFixed(0)}l${(s * rnd()).toFixed(0)},${(-s).toFixed(0)}l${s.toFixed(0)},${(s * rnd()).toFixed(0)}l${(-s * 0.6).toFixed(0)},${s.toFixed(0)}z`;
      (rnd() < 0.45 ? green : gray).push(d);
    }
  });
  return { green: green.join(""), gray: gray.join("") };
})();

function Layer({ of, children }: { of: keyof Tile; children: (d: string, key: number) => React.ReactNode }) {
  return (
    <>
      {tiles.map((t, i) => (
        <g key={i} transform={`translate(${t.x} ${t.y})`}>
          {((t[of] as string[] | undefined) ?? []).map((d, k) => children(d, k))}
        </g>
      ))}
    </>
  );
}

function Polys({ of, fill, amp = 0 }: { of: keyof Tile; fill: string; amp?: number }) {
  return <Layer of={of}>{(d, k) => <polygon key={k} points={amp ? wind(d, amp, 24) : d} fill={fill} />}</Layer>;
}

function Lines({ of, color, width, dash, amp = 0 }: { of: keyof Tile; color: string; width: number; dash?: string; amp?: number }) {
  return (
    <Layer of={of}>
      {(d, k) => (
        <polyline key={k} points={amp ? wind(d, amp, 22) : d} fill="none" stroke={color} strokeWidth={width} strokeDasharray={dash} strokeLinejoin="round" strokeLinecap="butt" />
      )}
    </Layer>
  );
}

function Shield({ x, y, n }: { x: number; y: number; n: string }) {
  return (
    <g transform={`translate(${x} ${y})`}>
      <path d="M-18,-20 L18,-20 Q24,-8 22,2 Q16,18 0,23 Q-16,18 -22,2 Q-24,-8 -18,-20Z" fill="#3b78cf" stroke="#9fc2f2" strokeWidth="2" />
      <text y="7" textAnchor="middle" className="fill-white text-[27px] font-bold">{n}</text>
    </g>
  );
}

function Plate({ x, y, n, w }: { x: number; y: number; n: string; w: number }) {
  return (
    <g transform={`translate(${x} ${y})`}>
      <rect x={-w / 2} y="-16" width={w} height="32" fill="#689f38" stroke="#a5c98a" strokeWidth="1.5" />
      <text y="9" textAnchor="middle" className="fill-white text-[26px] font-bold">{n}</text>
    </g>
  );
}

function Ring({ x, y, n }: { x: number; y: number; n: string }) {
  return (
    <g transform={`translate(${x} ${y})`}>
      <path d="M-28,-19 H28 Q29,22 0,24 Q-29,22 -28,-19Z" fill="#689f38" />
      <text y="8" textAnchor="middle" className="fill-white text-[26px] font-bold">{n}</text>
    </g>
  );
}

function Peak({ x, y }: { x: number; y: number }) {
  return (
    <g transform={`translate(${x} ${y})`}>
      <path d="M0,54 C-4,30 -30,22 -30,0 A30,30 0 1 1 30,0 C30,22 4,30 0,54Z" fill="#34a853" stroke="#5cb877" strokeWidth="2" />
      <path d="M-19,13 L-7,-9 L-1,1 L4,-15 L20,13Z" fill="#fff" />
    </g>
  );
}

function Pin({ x, y, color, children }: { x: number; y: number; color: string; children: React.ReactNode }) {
  return (
    <g transform={`translate(${x} ${y})`}>
      <path d="M0,92 C-6,50 -43,38 -43,0 A43,43 0 1 1 43,0 C43,38 6,50 0,92Z" fill={color} />
      {children}
    </g>
  );
}

function GoogleMap() {
  return (
    <svg viewBox="30 24 3480 1800" className="block h-full w-full font-[Roboto,'Noto_Sans_CJK_JP',sans-serif]" preserveAspectRatio="none">
      <rect x="30" y="24" width="3480" height="1800" fill="#a8dab5" />
      <path d={facets.dark} fill="#96d0a8" fillOpacity="0.45" />
      <path d={facets.light} fill="#c4e8c8" fillOpacity="0.38" />
      <path d={facets.bright} fill="#d0edcc" fillOpacity="0.6" />
      <g opacity="0.55">
        <Polys of="light" fill="#c6e8d0" amp={9} />
      </g>
      <Polys of="urban" fill="#e8eaed" amp={11} />
      <Polys of="green" fill="#b3dfc0" amp={5} />
      <path d={patches.green} fill="#bbe2c6" />
      <path d={patches.gray} fill="#e8eaed" />
      <Polys of="sand" fill="#f3e8d8" amp={3} />
      {water.map((d, i) => (
        <polygon key={i} points={wind(d, 4, 22)} fill="#9dc0fa" />
      ))}
      {beaches.map((d, i) => (
        <polygon key={i} points={d} fill="#fff" />
      ))}
      <Lines of="streams" color="#96bdf5" width={4} amp={4} />
      <Lines of="ferries" color="#6fa0ee" width={2.5} dash="12 7" />
      <Lines of="rails" color="#c3c5cb" width={5} amp={2} />
      <Lines of="borders" color="#66756c" width={3.4} dash="9 8" amp={5} />
      <Lines of="roads" color="#f9be4d" width={9.5} amp={4} />
      <Lines of="roads" color="#fff3cf" width={3.4} amp={4} />
      <Lines of="highways" color="#f8c35a" width={14.5} amp={1.5} />
      <Lines of="highways" color="#fedb8b" width={10} amp={1.5} />
      <path d={"M" + shinkansen} fill="none" stroke="#1b8a9b" strokeWidth="6" strokeLinejoin="round" />

      <g stroke="#fff" strokeWidth="6" strokeLinejoin="round" style={{ paintOrder: "stroke" }} strokeOpacity="0.85">
        <g className="fill-[#5f6368] text-[41px] font-medium" textAnchor="middle" letterSpacing="5">
          <text x="255" y="789">KYOTO</text>
          <text x="988" y="963">SHIGA</text>
          <text x="2264" y="1056">AICHI</text>
          <text x="3017" y="1257">SHIZUOKA</text>
        </g>
        {labels.map(([x, y, en, ja, size = "s"], i) => {
          const st = labelStyle[size];
          const left = en === "Mihama" || en === "Takamori" || en === "Kuwana" || en === "Fukuroi";
          const right = ["Omihachiman", "Motosu", "Minami-Alps", "Nishio", "Fujieda", "Nambu"].includes(en);
          const half = en.length * 9.6;
          const jx = left ? x - half : right ? x + half : x;
          return (
            <g key={i} className="fill-[#202124]" textAnchor="middle">
              <text x={x} y={y} className={st.cls}>{en}</text>
              <text x={jx} y={y + st.gap} textAnchor={left ? "start" : right ? "end" : "middle"} className={st.jp}>{ja}</text>
            </g>
          );
        })}
        <g className="fill-[#202124] text-[35px]">
          <text x="26" y="243">町</text>
          <text x="948" y="31">越前</text>
          <text x="1908" y="24">Osaka</text>
          <text x="26" y="1010">ama</text>
          <text x="28" y="803">e</text>
          <text x="3388" y="69">Hokuto</text>
          <text x="3398" y="106">北杜</text>
          <text x="3490" y="453">Y</text>
        </g>
      </g>
      {labels.map(([, , , , size = "s", dx, dy], i) =>
        dx && dy ? <circle key={i} cx={dx} cy={dy} r={size === "l" ? 10 : 7.5} fill="#fff" stroke="#202124" strokeWidth="3.2" /> : null,
      )}

      <g className="fill-[#3474d4] text-[35px]" textAnchor="middle">
        <text x="381" y="197">若狭湾</text>
        <text x="934" y="765">Lake Biwa</text>
        <text x="935" y="803">琵琶湖</text>
        <text x="1580" y="1500">Ise Bay</text>
        <text x="1580" y="1535">伊勢湾</text>
        <text x="3510" y="1355">S</text>
      </g>
      <defs>
        <path id="line-name" d="M2323,1520 Q2440,1577 2670,1586" />
      </defs>
      <text className="fill-[#1b8a9b] text-[35px]" stroke="#fff" strokeWidth="6" style={{ paintOrder: "stroke" }} textLength="322" lengthAdjust="spacing">
        <textPath href="#line-name">Tokaido-Shinkansen</textPath>
      </text>
      <g className="fill-[#188344] text-[42px] font-medium" stroke="#fff" strokeWidth="5" strokeOpacity="0.8" style={{ paintOrder: "stroke" }}>
        <text x="2809" y="41">Kiso</text>
        <text x="2809" y="83">Mountains</text>
        <text x="2809" y="119" className="text-[33px] font-normal">木曽山脈</text>
        <text x="3206" y="218" textAnchor="end">Mount Kita</text>
        <text x="3206" y="250" textAnchor="end" className="text-[33px] font-normal">北岳</text>
        <text x="3226" y="50" textAnchor="middle" className="text-[33px] font-normal">甲斐駒ヶ岳</text>
        <text x="408" y="1791" textAnchor="end" className="text-[38px]">Iwahashiyama</text>
        <text x="410" y="1825" textAnchor="end" className="text-[33px] font-normal">岩橋山</text>
      </g>
      <Peak x={2770} y={52} />
      <Peak x={3241} y={94} />
      <Peak x={3244} y={204} />
      <Peak x={448} y={1782} />

      <Shield x={934} y={401} n="8" />
      <Shield x={1170} y={728} n="21" />
      <Shield x={1258} y={696} n="21" />
      <Shield x={2099} y={614} n="21" />
      <Shield x={3349} y={74} n="20" />
      <Shield x={730} y={1679} n="25" />
      <Shield x={1334} y={1575} n="23" />
      <Shield x={2137} y={1284} n="1" />
      <Shield x={2341} y={1569} n="23" />
      <Shield x={2176} y={1650} n="42" />
      <Shield x={1963} y={1713} n="42" />
      <Plate x={1018} y={413} n="E8" w={50} />
      <Plate x={2583} y={520} n="E19" w={66} />
      <Plate x={1350} y={1127} n="E1A" w={66} />
      <Plate x={1688} y={1022} n="C2" w={50} />
      <Plate x={3045} y={1486} n="E1" w={48} />
      <Ring x={1801} y={972} n="3" />
      <Ring x={1768} y={1018} n="4" />

      <Pin x={1770} y={825} color="#82ac42">
        <path d="M-30,-18 h5 v20 h55 v17 h-5 v-8 h-50 v8 h-5z M-23,-8 q0,-6 7,-6 q7,0 8,4 l32,3 q5,1 5,5 h-52z" fill="#fff" />
      </Pin>
      <Pin x={546} y={1047} color="#ae4a69">
        <circle cx="2" cy="-28" r="6.5" fill="#fff" />
        <path d="M-3,-19 h8 q7,8 13,16 l-3,4 l-8,-7 l0,12 l8,24 h-7 l-8,-17 l-8,17 h-7 l6,-26 v-6 l-6,5 l-3,-4 q4,-10 15,-18z" fill="#fff" />
        <path d="M-19,5 h12 l-4,20 h-11z M13,0 h9 l3,19 h-9z" fill="#fff" />
      </Pin>

      <g className="text-[54px]" stroke="#fff" strokeWidth="4" strokeOpacity="0.75" style={{ paintOrder: "stroke" }} letterSpacing="-2">
        <text x="61" y="1797">
          <tspan fill="#4285f4">G</tspan>
          <tspan fill="#ea4335">o</tspan>
          <tspan fill="#fbbc04">o</tspan>
          <tspan fill="#4285f4">g</tspan>
          <tspan fill="#34a853">l</tspan>
          <tspan fill="#ea4335">e</tspan>
        </text>
      </g>
    </svg>
  );
}

function Chevron() {
  return (
    <svg width="12" height="12" viewBox="0 0 16 16" fill="none" stroke="#343a40" strokeWidth="2.2" strokeLinecap="round" strokeLinejoin="round">
      <path d="M2 5l6 6 6-6" />
    </svg>
  );
}

function Basket() {
  return (
    <svg width="36" height="32" viewBox="0 0 36 32" fill="#212529">
      <path d="M7 12.5L14.5 1M29 12.5L21.5 1" stroke="#212529" strokeWidth="2.6" strokeLinecap="round" />
      <path
        fillRule="evenodd"
        d="M1.6 11.6h32.8a1.4 1.4 0 0 1 1.4 1.4v1.2a1.4 1.4 0 0 1-1.4 1.4h-.5l-2.3 13.2a3 3 0 0 1-3 2.4H7.4a3 3 0 0 1-3-2.4L2.1 15.600h-.5A1.4 1.4 0 0 1 .2 14.2V13a1.4 1.4 0 0 1 1.4-1.400zM10 17.500v8a1 1 0 0 0 2 0v-8a1 1 0 0 0-2 0zm7 0v8a1 1 0 0 0 2 0v-8a1 1 0 0 0-2 0zm7 0v8a1 1 0 0 0 2 0v-8a1 1 0 0 0-2 0z"
      />
    </svg>
  );
}

const field = "flex h-[35px] items-center rounded-[3px] border border-[#ced4da] bg-white pl-3 pr-3.5 text-[14px]";

function Select({ children }: { children: string }) {
  return (
    <div className={field + " justify-between"}>
      <span>{children}</span>
      <Chevron />
    </div>
  );
}

export default function App() {
  return (
    <div className="relative h-[1080px] w-[1920px] overflow-hidden bg-white font-['Noto_Sans_CJK_JP',sans-serif] text-[14px] text-[#212529]">
      <header className="h-14 bg-[#f3f605]" />
      <div className="absolute left-0 top-14 flex h-[185px] w-[58px] items-start justify-center rounded-br-[20px] bg-[#f3f605] pt-[61px]">
        <span className="text-[29.5px] font-bold leading-[58px] [writing-mode:vertical-rl]">予約</span>
      </div>
      <nav className="ml-[1385px] flex h-[51px] w-[235px] items-center rounded-b-[20px] bg-[#d3e6f1] pl-[32px]">
        <FaLanguage className="h-[17px] w-[17px]" preserveAspectRatio="none" />
        <span className="ml-[29px] mt-px w-[45px] font-['Noto_Sans',sans-serif] text-[13px] leading-none">English</span>
        <span className="ml-[23px] flex h-[33px] w-[46px] justify-center border-b-2 border-black font-medium leading-[33px]">日本語</span>
      </nav>

      <main className="mx-auto mt-[76px] w-[1160px]">
        <h1 className="flex h-[52px] items-center justify-center rounded-t-[20px] bg-[#f3f605] text-[24px] font-bold leading-none">探す</h1>
        <div className="mt-8 grid grid-cols-5 gap-6">
          <div className={field + " text-[#6c757d]"}>年/月/日</div>
          <Select>すべてのカテゴリ</Select>
          <Select>価格帯</Select>
          <div className={field + " text-[#868e96]"}>キーワード</div>
          <button className="h-[35px] rounded-[3px] bg-[#d3e6f1]">探す</button>
        </div>
        <div className="mt-8 flex items-center justify-between">
          <div className="flex gap-4 font-bold text-black">
            <button className="h-[35px] rounded-[3px] bg-[#d3e6f1] px-[13px]">即時予約</button>
            <button className="h-[35px] rounded-[3px] bg-[#d3e6f1] px-[13px]">リクエスト予約</button>
            <button className="h-[35px] rounded-[3px] bg-[#f3f605] px-[13px]">地図</button>
          </div>
          <div className="flex items-center gap-4">
            <span>並べ替え条件:</span>
            <div className="w-[147px]">
              <Select>名前昇順</Select>
            </div>
          </div>
        </div>

        <section className="relative mt-6 h-[600px] overflow-hidden font-[Roboto,sans-serif]">
          <GoogleMap />
          <div className="absolute left-[10px] top-[10px] flex h-10 rounded-[2px] bg-white text-[18px] leading-[39px] shadow-[0_1px_4px_-1px_rgba(0,0,0,0.3)]">
            <span className="w-[70px] border-r border-[#ebebeb] pl-[18px] font-medium text-black">Map</span>
            <span className="w-[98px] pl-[17px] text-[#565656]">Satellite</span>
          </div>
          <div className="absolute right-[10px] top-[10px] flex size-10 items-center justify-center rounded-[2px] bg-white shadow-[0_1px_4px_-1px_rgba(0,0,0,0.3)]">
            <svg width="18" height="18" viewBox="0 0 18 18" fill="#666">
              <path d="M0 0v6h2V2h4V0H0zm16 0h-4v2h4v4h2V0h-2zm0 16h-4v2h6v-6h-2v4zM2 12H0v6h6v-2H2v-4z" />
            </svg>
          </div>
          <div className="absolute bottom-[137px] right-[10px] flex size-10 items-center justify-center rounded-[2px] bg-white shadow-[0_1px_4px_-1px_rgba(0,0,0,0.3)]">
            <svg width="18" height="31" viewBox="0 0 18 31">
              <path d="M3 12q1-1.500 4-1.500h4q3 0 4 1.500l2 8-2.500 1.500-1-2-.5 10.500h-3.500l-.5-6-.5 6H5l-.5-10.500-1 2L1 20z" fill="#fbb828" stroke="#b9751c" strokeWidth=".7" />
              <path d="M6 11l3 5 3-5z" fill="#d2732a" />
              <circle cx="9" cy="5.8" r="5" fill="#fbb828" stroke="#d99423" strokeWidth=".8" />
            </svg>
          </div>
          <div className="absolute bottom-[24px] right-[10px] flex h-[81px] w-10 flex-col items-center rounded-[2px] bg-white shadow-[0_1px_4px_-1px_rgba(0,0,0,0.3)]">
            <div className="flex h-10 items-center">
              <svg width="18" height="18" fill="#666">
                <path d="M7 0h4v7h7v4h-7v7H7v-7H0V7h7z" />
              </svg>
            </div>
            <div className="h-px w-[30px] bg-[#e0e2e6]" />
            <div className="flex h-10 items-center">
              <div className="h-1 w-[18px] bg-[#666]" />
            </div>
          </div>
          <footer className="absolute bottom-0 right-0 flex h-[14px] items-center bg-[#d9e6f8]/90 text-[10px] leading-[14px] text-black">
            <span className="w-[98px] border-r border-[#9dc0fa] pl-[5px]">Keyboard shortcuts</span>
            <span className="w-[121px] pl-[6px]">Map data ©2022 Google</span>
            <span className="w-[71px] pl-[6px]">Terms of Use</span>
            <span className="w-[95px] pl-[6px]">Report a map error</span>
          </footer>
        </section>
      </main>

      <div className="absolute left-[1824px] top-[984px] flex size-16 items-center justify-center rounded-full bg-[#f3f605] pt-1 shadow-[0_0_14px_rgba(0,0,0,0.22)]">
        <Basket />
        <span className="absolute left-[47px] top-[-15px] flex size-8 items-center justify-center rounded-full bg-[#d3e6f1] text-[15px] font-bold leading-none">1</span>
      </div>
    </div>
  );
}
